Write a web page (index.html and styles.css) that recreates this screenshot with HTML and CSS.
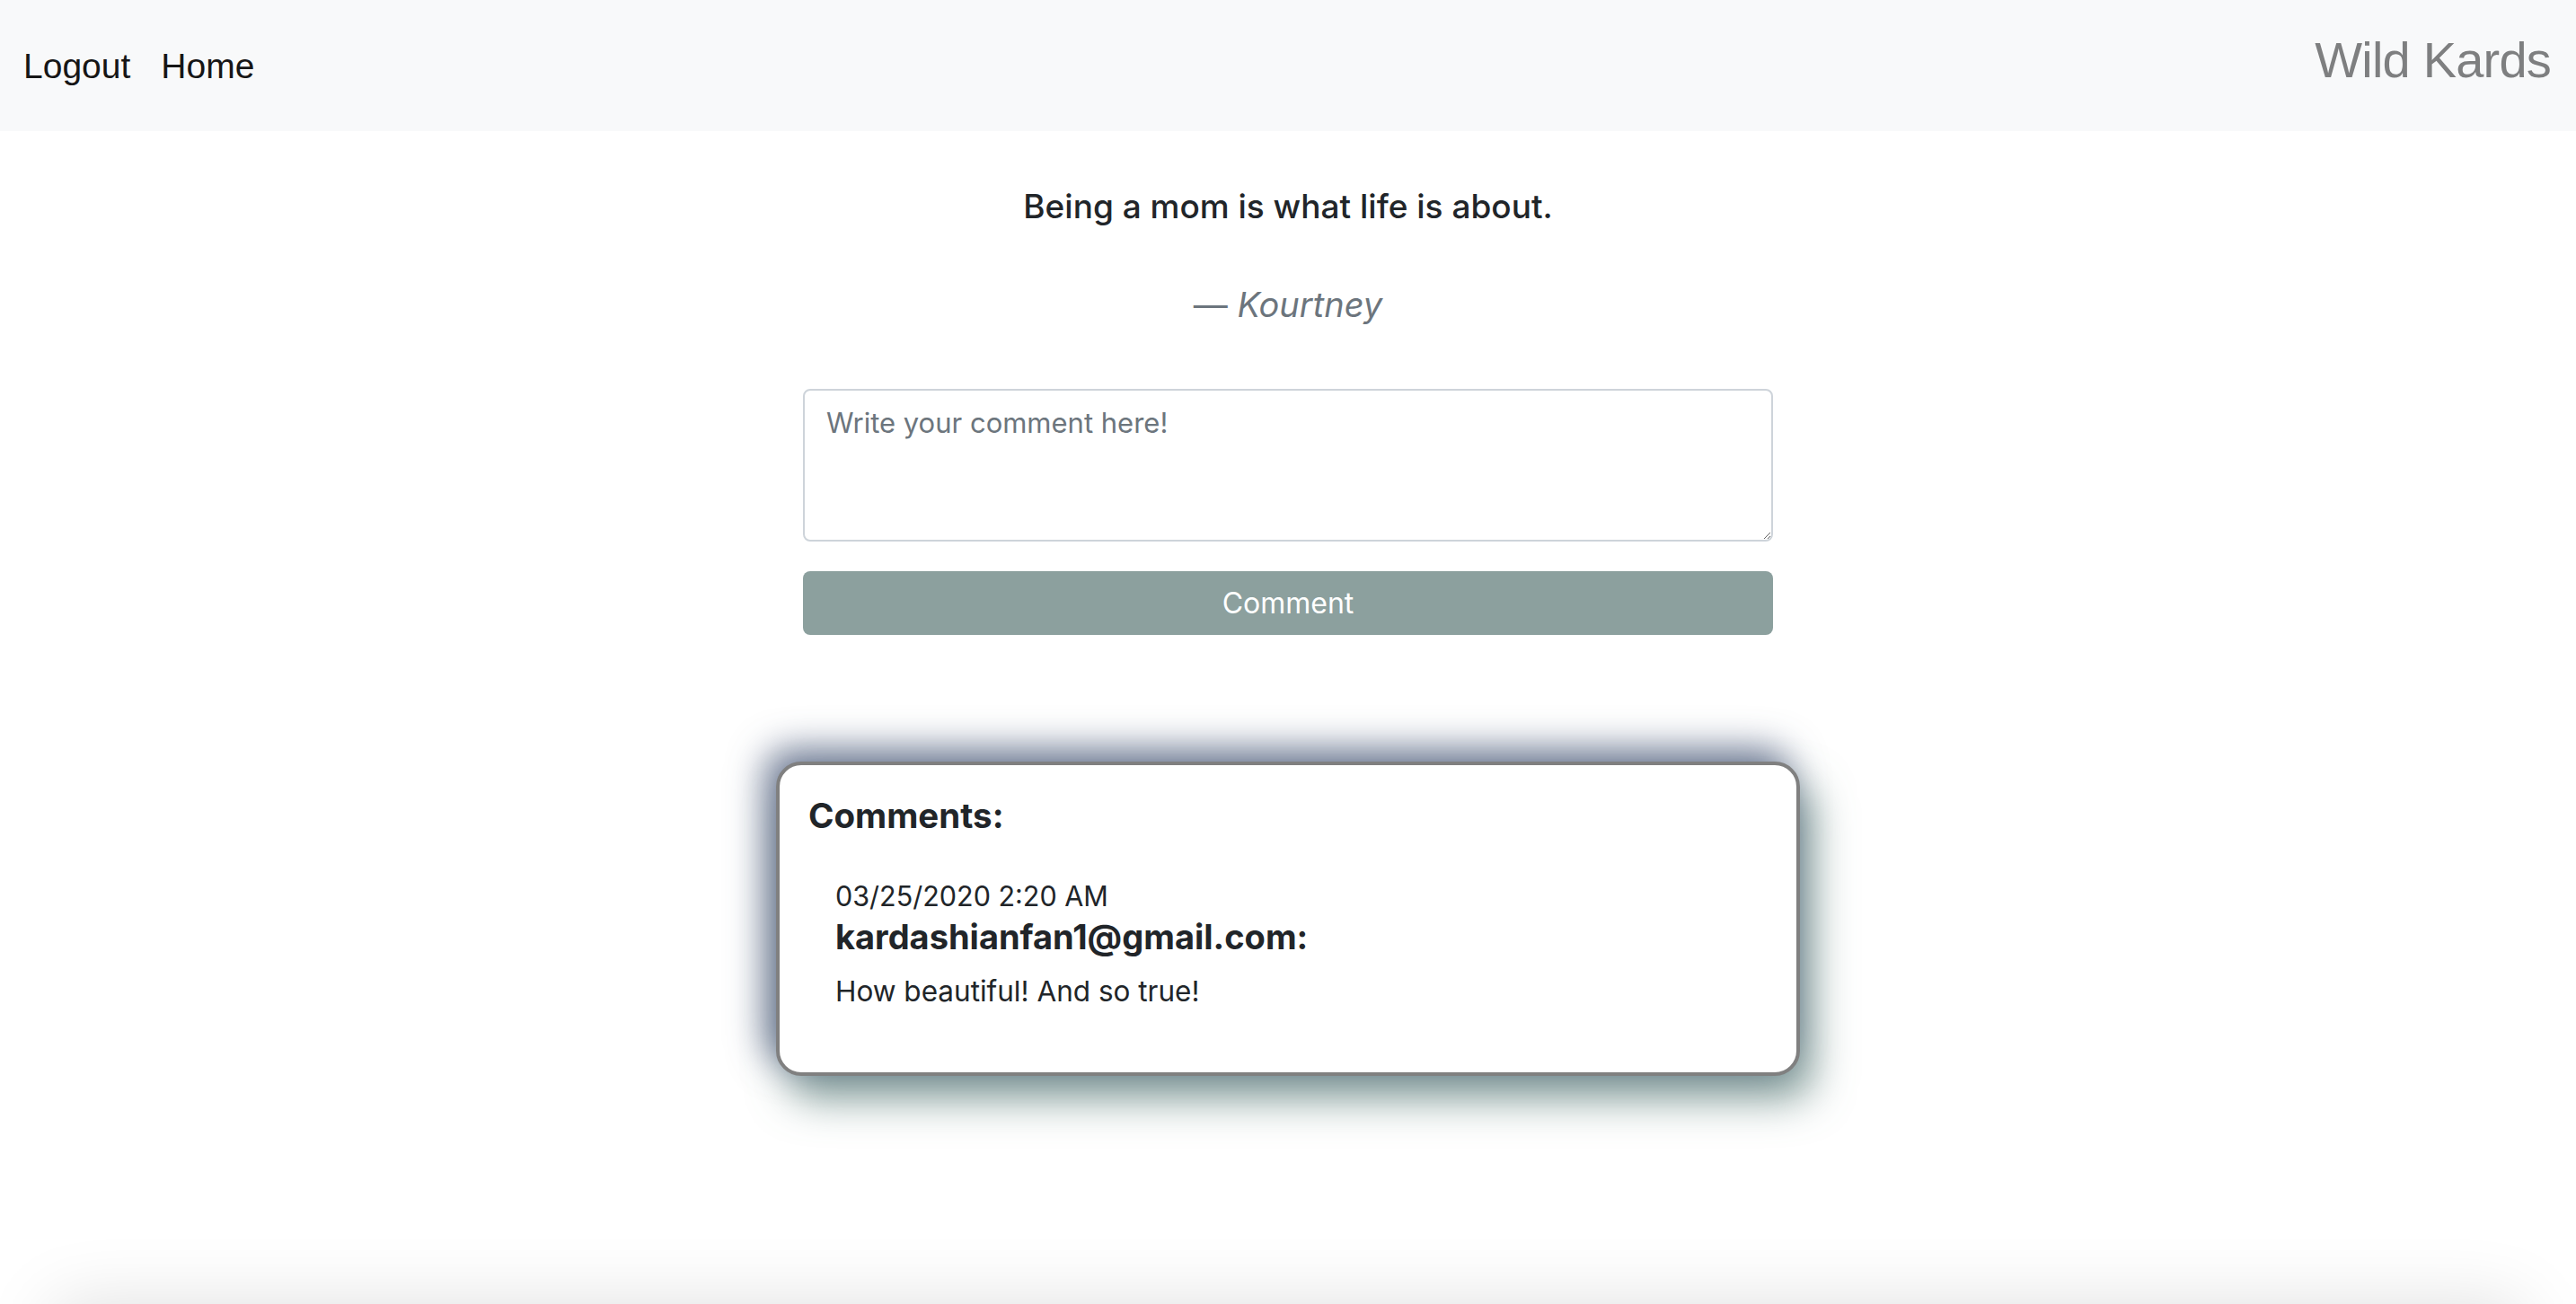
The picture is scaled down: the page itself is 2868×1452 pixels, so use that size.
FILE: index.html
```html
<!DOCTYPE html>
<html lang="en">
<head>
<meta charset="utf-8">
<title>Wild Kards</title>
<link rel="stylesheet" href="styles.css">
</head>
<body>
<div class="page">
  <nav class="navbar">
    <div class="nav-links">
      <a class="nav-link" href="#">Logout</a>
      <a class="nav-link" href="#">Home</a>
    </div>
    <a class="brand" href="#">Wild Kards</a>
  </nav>
  <main class="main">
    <blockquote class="quote">
      <p class="quote-text">Being a mom is what life is about.</p>
      <footer class="quote-footer">— <cite>Kourtney</cite></footer>
    </blockquote>
    <form class="comment-form">
      <textarea class="comment-input" placeholder="Write your comment here!"></textarea>
      <button type="button" class="comment-btn">Comment</button>
    </form>
    <section class="comments-card">
      <h2 class="comments-title">Comments:</h2>
      <div class="comment">
        <div class="comment-date">03/25/2020 2:20 AM</div>
        <div class="comment-author">kardashianfan1@gmail.com:</div>
        <p class="comment-body">How beautiful! And so true!</p>
      </div>
    </section>
  </main>
</div>
<footer class="site-footer"></footer>
</body>
</html>
```
FILE: styles.css
```css
html, body {
  margin: 0;
  padding: 0;
  background: #ffffff;
}
body {
  font-family: Inter, "Noto Sans", sans-serif;
  color: #212529;
}
.page {
  min-height: 1452px;
}
.navbar {
  height: 146px;
  background: #f8f9fa;
  display: flex;
  justify-content: space-between;
  align-items: center;
  padding: 0 28px 0 26px;
  box-sizing: border-box;
}
.nav-links {
  display: flex;
  gap: 34px;
  padding-top: 2px;
}
.nav-link {
  font-family: "Liberation Sans", Arial, sans-serif;
  font-size: 39px;
  color: #161616;
  text-decoration: none;
}
.brand {
  font-family: "Liberation Sans", Arial, sans-serif;
  font-size: 56px;
  color: #7e7f80;
  text-decoration: none;
  letter-spacing: -0.8px;
  padding-bottom: 14px;
}
.main {
  display: flex;
  flex-direction: column;
  align-items: center;
}
.quote {
  margin: 62px 0 0;
  text-align: center;
}
.quote-text {
  margin: 0;
  font-size: 37px;
  line-height: 44px;
  font-weight: 500;
  color: #212529;
}
.quote-footer {
  margin-top: 63px;
  font-size: 38px;
  line-height: 48px;
  color: #6c757d;
}
.quote-footer cite {
  font-style: italic;
}
.comment-form {
  width: 1080px;
  margin-top: 70px;
  display: flex;
  flex-direction: column;
  gap: 33px;
}
.comment-input {
  box-sizing: border-box;
  width: 1080px;
  height: 170px;
  border: 2px solid #ced4da;
  border-radius: 8px;
  padding: 12px 24px;
  font-family: Inter, "Noto Sans", sans-serif;
  font-size: 31px;
  line-height: 48px;
  color: #495057;
  resize: vertical;
  outline: none;
}
.comment-input::placeholder {
  color: #6c757d;
}
.comment-btn {
  height: 71px;
  border: none;
  border-radius: 8px;
  background: #8ca09e;
  color: #ffffff;
  font-family: Inter, "Noto Sans", sans-serif;
  font-size: 32px;
  cursor: pointer;
}
.comments-card {
  box-sizing: border-box;
  width: 1140px;
  margin-top: 141px;
  border: 4px solid #808080;
  border-radius: 28px;
  background: #ffffff;
  padding: 33px 32px 70px;
  box-shadow: -12px -14px 40px rgba(62, 78, 112, 0.75), 14px 26px 46px rgba(88, 122, 118, 0.72);
}
.comments-title {
  margin: 0;
  font-size: 38.5px;
  line-height: 46px;
  font-weight: 700;
}
.comment {
  padding-left: 30px;
  margin-top: 47px;
}
.comment-date {
  font-size: 30.5px;
  line-height: 40px;
}
.comment-author {
  margin-top: 2px;
  font-size: 38px;
  line-height: 46px;
  font-weight: 700;
}
.comment-body {
  margin: 18px 0 0;
  font-size: 31.5px;
  line-height: 40px;
}
.site-footer {
  height: 200px;
  margin: 0 60px;
  background: #ffffff;
  box-shadow: 0 0 80px rgba(0, 0, 0, 0.13);
}
```
